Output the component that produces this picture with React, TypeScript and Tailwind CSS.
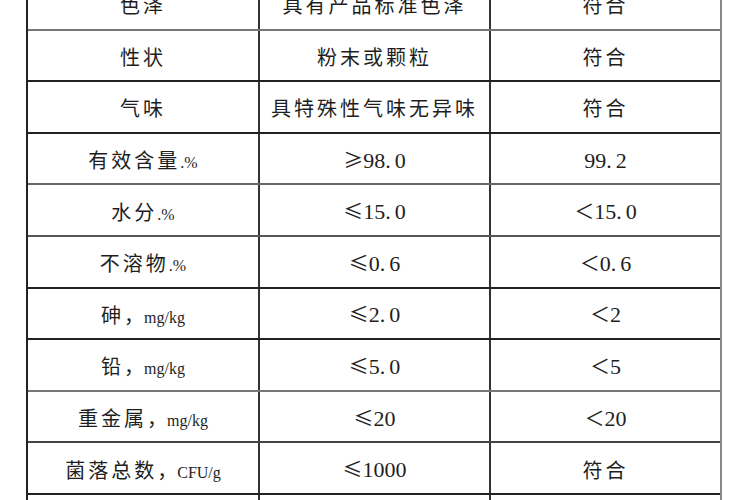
import React from "react";

const cjk = "font-['Noto_Sans_CJK_SC',sans-serif] text-[20px] tracking-[3px] text-[#1e1e1e]";
const lat = "font-['Liberation_Serif','Noto_Sans_CJK_SC',serif] text-[22px] text-[#1e1e1e]";
const sm = "font-['Liberation_Serif',serif] text-[16px] text-[#1e1e1e]";
const sym = "font-['Noto_Sans_CJK_SC',sans-serif] text-[20px] text-[#1e1e1e]";

const C = ({ t }: { t: string }) => <span className={cjk}>{t}</span>;

const Num = ({ s, v }: { s?: string; v: string }) => {
  const parts = v.split(".");
  return (
    <span className="flex items-baseline">
      {s && <span className={sym}>{s}</span>}
      <span className={lat}>
        {parts[0]}
        {parts.length > 1 && (
          <>
            <span className="mr-[4px]">.</span>
            {parts[1]}
          </>
        )}
      </span>
    </span>
  );
};

const Unit = ({ name, unit, dot }: { name: string; unit: string; dot?: boolean }) => (
  <span className="flex items-baseline">
    <span className={cjk}>{name}</span>
    {dot ? (
      <span className={sm}>.</span>
    ) : (
      <span className={sym + " w-[20px]"}>，</span>
    )}
    <span className={sm + (dot ? " text-[14px]" : "")}>{unit}</span>
  </span>
);

type Row = { a: React.ReactNode; b: React.ReactNode; c: React.ReactNode; line: string };

const rows: Row[] = [
  { a: <C t="色泽" />, b: <C t="具有产品标准色泽" />, c: <C t="符合" />, line: "border-[#777]" },
  { a: <C t="性状" />, b: <C t="粉末或颗粒" />, c: <C t="符合" />, line: "border-[#222]" },
  { a: <C t="气味" />, b: <C t="具特殊性气味无异味" />, c: <C t="符合" />, line: "border-[#222]" },
  { a: <Unit name="有效含量" unit="%" dot />, b: <Num s="≥" v="98.0" />, c: <Num v="99.2" />, line: "border-[#666]" },
  { a: <Unit name="水分" unit="%" dot />, b: <Num s="≤" v="15.0" />, c: <Num s="＜" v="15.0" />, line: "border-[#555]" },
  { a: <Unit name="不溶物" unit="%" dot />, b: <Num s="≤" v="0.6" />, c: <Num s="＜" v="0.6" />, line: "border-[#222]" },
  { a: <Unit name="砷" unit="mg/kg" />, b: <Num s="≤" v="2.0" />, c: <Num s="＜" v="2" />, line: "border-[#222]" },
  { a: <Unit name="铅" unit="mg/kg" />, b: <Num s="≤" v="5.0" />, c: <Num s="＜" v="5" />, line: "border-[#777]" },
  { a: <Unit name="重金属" unit="mg/kg" />, b: <Num s="≤" v="20" />, c: <Num s="＜" v="20" />, line: "border-[#444]" },
  { a: <Unit name="菌落总数" unit="CFU/g" />, b: <Num s="≤" v="1000" />, c: <C t="符合" />, line: "border-[#222]" },
  { a: null, b: null, c: null, line: "border-[#222]" },
];

export default function App() {
  return (
    <div className="w-[750px] h-[500px] overflow-hidden bg-white">
      <div className="ml-[26px] w-[696px] -mt-[23px] border-t-2 border-l-2 border-r-2 border-l-[#222] border-r-[#888] border-t-[#222]">
        {rows.map((r, i) => (
          <div key={i} className={"grid grid-cols-[232px_231px_1fr] h-[51.6px] border-b-2 " + r.line}>
            <div className="flex items-center justify-center border-r-2 border-[#333] pt-[3px]">{r.a}</div>
            <div className="flex items-center justify-center border-r-2 border-[#333] pt-[3px]">{r.b}</div>
            <div className="flex items-center justify-center pt-[3px]">{r.c}</div>
          </div>
        ))}
      </div>
    </div>
  );
}
